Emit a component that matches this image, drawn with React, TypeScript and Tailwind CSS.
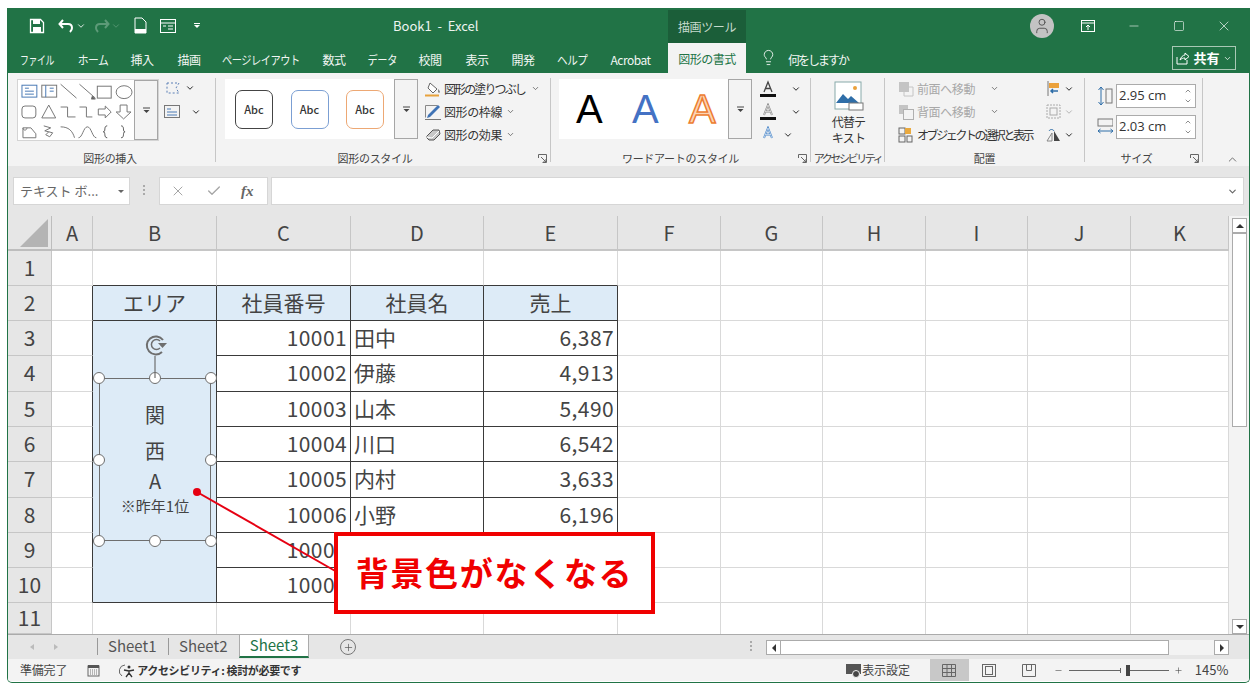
import { Check, ChevronDown, ChevronUp, Lightbulb, Minus, Plus, Square, User, X } from "lucide-react";
import type { ReactNode } from "react";

const tabs = [
  { label: "ファイル", w: "w-[34px]", gap: "ml-[12px]", inner: "scale-x-[0.74]" },
  { label: "ホーム", w: "w-[30px]", gap: "ml-[24px]", inner: "scale-x-[0.9]" },
  { label: "挿入", w: "w-[24px]", gap: "ml-[22px]", inner: "" },
  { label: "描画", w: "w-[24px]", gap: "ml-[23px]", inner: "" },
  { label: "ページレイアウト", w: "w-[78px]", gap: "ml-[21px]", inner: "scale-x-[0.85]" },
  { label: "数式", w: "w-[24px]", gap: "ml-[22px]", inner: "" },
  { label: "データ", w: "w-[28px]", gap: "ml-[22px]", inner: "scale-x-[0.85]" },
  { label: "校閲", w: "w-[24px]", gap: "ml-[22px]", inner: "" },
  { label: "表示", w: "w-[24px]", gap: "ml-[23px]", inner: "" },
  { label: "開発", w: "w-[24px]", gap: "ml-[22px]", inner: "" },
  { label: "ヘルプ", w: "w-[30px]", gap: "ml-[22px]", inner: "scale-x-[0.88]" },
  { label: "Acrobat", w: "w-[45px]", gap: "ml-[21px]", inner: "" },
];

const rows = [
  { no: "10001", name: "田中", sales: "6,387" },
  { no: "10002", name: "伊藤", sales: "4,913" },
  { no: "10003", name: "山本", sales: "5,490" },
  { no: "10004", name: "川口", sales: "6,542" },
  { no: "10005", name: "内村", sales: "3,633" },
  { no: "10006", name: "小野", sales: "6,196" },
  { no: "10007", name: "", sales: "" },
  { no: "10008", name: "", sales: "" },
];

const colHeads = ["A", "B", "C", "D", "E", "F", "G", "H", "I", "J", "K"];
const light = "border-r border-b border-[#d9d9d9]";
const dark = "border-r border-b border-[#3a3a3a]";
const cellText = "text-[21px] leading-none text-[#444] flex items-center overflow-hidden whitespace-nowrap pb-[2px]";

function Ico({ w = 18, h = 18, children }: { w?: number; h?: number; children: ReactNode }) {
  return (
    <svg width={w} height={h} viewBox={`0 0 ${w} ${h}`} fill="none" className="shrink-0">
      {children}
    </svg>
  );
}

function Chev({ className = "text-[#444]" }: { className?: string }) {
  return <ChevronDown size={10} strokeWidth={2} className={className} />;
}

function Expand() {
  return (
    <div className="flex w-[24px] shrink-0 items-center justify-center self-stretch border border-[#a6a6a6] bg-[#f3f3f3]">
      <svg width="9" height="7" viewBox="0 0 9 7">
        <path d="M1 1h7" stroke="#444" />
        <path d="M1.5 3h6L4.5 6z" fill="#444" />
      </svg>
    </div>
  );
}

function Launcher() {
  return (
    <svg width="9" height="9" viewBox="0 0 9 9" fill="none" stroke="#666">
      <path d="M.5 4V.5h8v8H4.5M3 3l5 5M8 5v3H5" />
    </svg>
  );
}

function Group({
  w,
  label,
  labelClass = "",
  launcher,
  children,
}: {
  w: string;
  label: string;
  labelClass?: string;
  launcher?: boolean;
  children: ReactNode;
}) {
  return (
    <div className={`${w} flex h-[84px] shrink-0 flex-col border-r border-[#c6c6c6]`}>
      <div className="flex h-[72px] shrink-0 items-start">{children}</div>
      <div className={`relative flex h-[16px] shrink-0 items-center justify-center whitespace-nowrap text-[11px] leading-none tracking-[-0.3px] text-[#444] ${labelClass}`}>
        {label}
        {launcher && (
          <span className="absolute right-[3px] top-[4px] flex">
            <Launcher />
          </span>
        )}
      </div>
    </div>
  );
}

function RibbonRow({
  icon,
  text,
  chev = true,
  muted = false,
  ml = "ml-[2px]",
  track = "tracking-[-0.4px]",
  chevMl = "ml-[4px]",
}: {
  icon: ReactNode;
  text: string;
  chev?: boolean;
  muted?: boolean;
  ml?: string;
  track?: string;
  chevMl?: string;
}) {
  return (
    <div className={`flex h-[23px] items-center whitespace-nowrap text-[12px] ${track} ${muted ? "text-[#a8a8a8]" : "text-[#333]"}`}>
      {icon}
      <span className={ml}>{text}</span>
      {chev && <ChevronDown size={9} strokeWidth={2} className={`${chevMl} text-[#555]`} />}
    </div>
  );
}

function ShapeGallery() {
  return (
    <svg width="117" height="60" viewBox="0 0 117 60" fill="none" stroke="#777" strokeWidth="1">
      <rect x="4" y="5" width="15" height="12" stroke="#4a7ab5" />
      <path d="M7 8h4M7 11h9M7 14h9" stroke="#4a7ab5" />
      <rect x="24" y="5" width="15" height="12" stroke="#777" />
      <path d="M28 5v12M32 8h4M32 11h4" stroke="#4a7ab5" />
      <path d="M43 4l16 14M62 4l16 14" />
      <path d="M75 16l3 3-4 0z" fill="#555" />
      <rect x="80" y="6" width="14" height="12" />
      <ellipse cx="107" cy="12" rx="8" ry="6.5" />
      <rect x="4" y="26" width="14" height="12" rx="3" />
      <path d="M24 38l7-13 7 13z" />
      <path d="M43 27h7v10h8M62 27h7v10h6" />
      <path d="M81 29h7v-3l6 6-6 6v-3h-7z" />
      <path d="M103 25h7v7h4l-7.500 7-7.500-7h4z" />
      <path d="M5 48h8l5 6v4H5zM5 48c0 3 4 3 4 0" />
      <path d="M26 46l7 2-6 3 8 2-3 4-4-2 3-3" />
      <path d="M43 47c8 0 12 4 14 11" />
      <path d="M61 58c4 0 5-11 9-11s5 11 9 11" />
      <path d="M90 46c-4 0-1 6-4 6 3 0 0 6 4 6M104 46c4 0 1 6 4 6-3 0 0 6-4 6" stroke="#555" />
    </svg>
  );
}

function UnderA({ bar, blue, outline }: { bar?: boolean; blue?: boolean; outline?: boolean }) {
  return (
    <svg width="16" height="18" viewBox="0 0 16 18" fill="none">
      <path d="M4 12L8 2l4 10M5.500 8.500h5" stroke={blue ? "#4a86c8" : outline ? "#888" : "#444"} strokeWidth={blue || outline ? 2 : 1.3} />
      {(blue || outline) && <path d="M4 12L8 2l4 10M5.500 8.500h5" stroke="#fff" strokeWidth=".6" />}
      {bar && <rect x="0" y="14" width="16" height="3" fill="#111" />}
    </svg>
  );
}

function Handle({ className }: { className: string }) {
  return <span className={`absolute h-[12px] w-[12px] rounded-full border-[1.5px] border-[#6e6e6e] bg-white ${className}`} />;
}

function AbcBox({ color }: { color: string }) {
  return (
    <div className={`flex h-[39px] w-[38px] items-center justify-center rounded-[7px] border-[1.5px] bg-white text-[11px] font-medium text-[#333] ${color}`}>
      Abc
    </div>
  );
}

function TitleBar() {
  return (
    <div className="flex h-[35px] items-center bg-[#217346] text-white">
      <div className="ml-[21px] flex items-center">
        <Ico w={16} h={16}>
          <path d="M1.500 1.500h10l3 3v10h-13z" stroke="#fff" strokeWidth="1.300" />
          <rect x="4" y="2" width="7" height="4" fill="#fff" />
          <rect x="4" y="9" width="8" height="5" fill="#fff" />
        </Ico>
        <span className="ml-[13px] flex">
          <Ico w={16} h={14}>
            <path d="M5 1L1.500 5 5 9M2 5h8c3 0 4 2 4 4s-1 3-2 4" stroke="#fff" strokeWidth="2" />
          </Ico>
        </span>
        <Chev className="ml-[2px] text-white" />
        <span className="ml-[8px] flex">
          <Ico w={16} h={14}>
            <path d="M11 1l3.500 4L11 9M14 5H6c-3 0-4 2-4 4s1 3 2 4" stroke="#5d9a78" strokeWidth="2" />
          </Ico>
        </span>
        <Chev className="ml-[1px] text-[#5d9a78]" />
        <span className="ml-[13px] flex">
          <Ico w={13} h={17}>
            <path d="M1 1h7l4 4v11H1z" stroke="#fff" />
            <path d="M1 12h11v4H1z" fill="#fff" />
          </Ico>
        </span>
        <span className="ml-[13px] flex">
          <Ico w={16} h={14}>
            <rect x=".5" y=".5" width="15" height="13" stroke="#fff" />
            <path d="M.5 4h15M3 7h3M8 7h5M8 10h5" stroke="#fff" />
          </Ico>
        </span>
        <span className="ml-[18px] flex flex-col items-center gap-[1px]">
          <span className="h-px w-[6px] bg-white" />
          <span className="h-0 w-0 border-x-[3px] border-t-[3px] border-x-transparent border-t-white" />
        </span>
      </div>
      <span className="ml-[193px] w-[89px] whitespace-nowrap text-[13px] text-[#eef5f0]">Book1&nbsp; -&nbsp; Excel</span>
      <div className="ml-[186px] mt-[2px] flex h-[33px] w-[78px] items-center justify-center bg-[#1b5e39] text-[12px] tracking-[-0.4px] text-[#c5dacc]">
        描画ツール
      </div>
      <div className="ml-[284px] flex h-[24px] w-[24px] items-center justify-center rounded-full bg-[#c3c3c3]">
        <User size={18} strokeWidth={1.3} className="text-[#555]" />
      </div>
      <span className="ml-[27px] flex">
        <Ico w={14} h={12}>
          <rect x=".5" y=".5" width="13" height="11" stroke="#fff" />
          <path d="M.5 3h13M7 10V5M5 7l2-2 2 2" stroke="#fff" />
        </Ico>
      </span>
      <Minus size={14} strokeWidth={1} className="ml-[32px]" />
      <Square size={12} strokeWidth={1.2} className="ml-[32px]" />
      <X size={16} strokeWidth={1} className="ml-[31px]" />
    </div>
  );
}

function TabRow() {
  return (
    <div className="flex h-[30px] items-end bg-[#217346] text-[12px] text-[#f1f6f3]">
      {tabs.map((t) => (
        <span key={t.label} className={`${t.gap} ${t.w} mb-[7px] flex shrink-0 justify-center whitespace-nowrap leading-none tracking-[-0.5px]`}>
          <span className={t.inner}>{t.label}</span>
        </span>
      ))}
      <div className="ml-[15px] flex h-[30px] w-[78px] items-center justify-center bg-[#f3f3f3] pt-[1px] tracking-[-0.5px] text-[#217346]">
        図形の書式
      </div>
      <Lightbulb size={17} strokeWidth={1.2} className="mb-[7px] ml-[14px] text-white" />
      <span className="mb-[7px] ml-[11px] w-[57px] whitespace-nowrap leading-none tracking-[-2px]">何をしますか</span>
      <div className="mb-[3px] ml-[327px] flex h-[24px] w-[64px] items-center justify-center border border-[#a9c8b5] text-[13px] font-bold text-white">
        <svg width="14" height="13" viewBox="0 0 14 13" fill="none" stroke="#fff" className="mr-[3px]">
          <path d="M1 5v7h10V8M4 8c1-3 3-5 5-5V1l4 3.500L9 8V6C7 6 5.500 6.500 4 8z" />
        </svg>
        共有
        <ChevronDown size={9} className="ml-[3px]" />
      </div>
    </div>
  );
}

function Ribbon() {
  return (
    <div className="flex h-[93px] items-start bg-[#f3f3f3] pt-[5px]">
      <Group w="w-[208px]" label="図形の挿入" labelClass="pr-[3px]">
        <div className="ml-[9px] mt-[1px] flex h-[62px] w-[142px] border border-[#d4d4d4] bg-white">
          <ShapeGallery />
          <Expand />
        </div>
        <div className="ml-[5px] flex flex-col">
          <div className="flex h-[20px] items-center">
            <Ico w={18} h={16}>
              <path d="M3 3h12l-3 5 3 5H3z" stroke="#5a7fb5" strokeDasharray="2 2" />
            </Ico>
            <Chev className="ml-[3px]" />
          </div>
          <div className="mt-[3px] flex h-[22px] items-center">
            <Ico w={16} h={14}>
              <rect x=".5" y=".5" width="15" height="12" stroke="#777" />
              <path d="M3 4h4M3 7h10M3 10h10" stroke="#4a7ab5" />
            </Ico>
            <Chev className="ml-[11px]" />
          </div>
        </div>
      </Group>
      <Group w="w-[335px]" label="図形のスタイル" labelClass="pr-[16px]" launcher>
        <div className="ml-[9px] mt-[1px] flex h-[60px] w-[193px] items-center bg-white">
          <div className="flex flex-1 justify-between pl-[10px] pr-[10px]">
            <AbcBox color="border-[#444]" />
            <AbcBox color="border-[#7b9fd3]" />
            <AbcBox color="border-[#eda874]" />
          </div>
          <Expand />
        </div>
        <div className="-mt-[1px] ml-[6px] flex flex-col">
          <RibbonRow
            text="図形の塗りつぶし"
            track="tracking-[-1.900px]"
            chevMl="ml-[6px]"
            icon={
              <Ico>
                <path d="M6 3l7 6-4 4-5-5z" fill="#fff" stroke="#666" />
                <path d="M14 9c1 1 2 2 2 3s-2 1-2 0z" fill="#888" />
                <path d="M1 15.500h14" stroke="#e8a23c" strokeWidth="2" />
              </Ico>
            }
          />
          <RibbonRow
            text="図形の枠線"
            icon={
              <Ico>
                <path d="M1.500 14.500v-12h12" stroke="#888" />
                <path d="M4 12l10-10 2 2L6 14l-3 1z" fill="#3f73b5" />
                <path d="M1 16.500h16" stroke="#777" />
              </Ico>
            }
          />
          <RibbonRow
            text="図形の効果"
            icon={
              <Ico>
                <path d="M2 11l7-7h6l1 4-6 6H5z" fill="#c8c8c8" stroke="#555" />
                <path d="M2 11l6 1 7-7" stroke="#fff" />
              </Ico>
            }
          />
        </div>
      </Group>
      <Group w="w-[260px]" label="ワードアートのスタイル" launcher>
        <div className="ml-[8px] mt-[1px] flex h-[60px] w-[193px] items-center bg-white">
          <div className="flex flex-1 pl-[17px] font-['Liberation_Sans',sans-serif] text-[40px] leading-none">
            <span className="w-[56px] text-black">A</span>
            <span className="w-[57px] text-[#4472c4]">A</span>
            <span className="text-[#fbd5b5] [-webkit-text-stroke:1.5px_#ed7d31]">A</span>
          </div>
          <Expand />
        </div>
        <div className="-mt-[1px] ml-[8px] flex flex-col">
          <div className="flex h-[23px] items-center">
            <UnderA bar />
            <Chev className="ml-[15px]" />
          </div>
          <div className="flex h-[23px] items-center">
            <UnderA bar outline />
            <Chev className="ml-[15px]" />
          </div>
          <div className="flex h-[23px] items-center">
            <UnderA blue />
            <Chev className="ml-[7px]" />
          </div>
        </div>
      </Group>
      <Group w="w-[74px]" label="アクセシビリティ" labelClass="tracking-[-2.400px]">
        <div className="flex w-full flex-col items-center pl-[2px] pt-[3px]">
          <svg width="30" height="30" viewBox="0 0 30 30" fill="none">
            <rect x="1" y="1" width="26" height="27" fill="#fff" stroke="#8aa" />
            <circle cx="21" cy="7" r="2" fill="#eba13b" />
            <path d="M2 22l7-9 5 5 3-3 8 7z" fill="#2f6ea8" />
            <rect x="15" y="22" width="14" height="7" fill="#fff" stroke="#777" />
          </svg>
          <div className="mt-[3px] text-center text-[12px] leading-[16px] tracking-[-0.8px] text-[#333]">
            代替テ
            <br />
            キスト
          </div>
        </div>
      </Group>
      <Group w="w-[200px]" label="配置">
        <div className="-mt-[1px] ml-[13px] flex w-[136px] flex-col">
          <RibbonRow
            muted
            text="前面へ移動"
            ml="ml-[3px]"
            chevMl="ml-[15px]"
            icon={
              <Ico w={16} h={16}>
                <rect x="1" y="1" width="10" height="10" fill="#c4c4c4" />
                <path d="M11 6h4v9H6v-4" stroke="#c4c4c4" />
              </Ico>
            }
          />
          <RibbonRow
            muted
            text="背面へ移動"
            ml="ml-[3px]"
            chevMl="ml-[15px]"
            icon={
              <Ico w={16} h={16}>
                <rect x="1" y="1" width="9" height="9" fill="#c4c4c4" />
                <rect x="5.500" y="5.500" width="10" height="10" fill="#f3f3f3" stroke="#b0b0b0" />
              </Ico>
            }
          />
          <RibbonRow
            chev={false}
            text="オブジェクトの選択と表示"
            ml="ml-[3px]"
            track="tracking-[-2.400px]"
            icon={
              <Ico w={16} h={16}>
                <rect x="1" y="1" width="6" height="6" stroke="#666" />
                <rect x="7" y="1" width="6" height="6" fill="#e9a93f" />
                <rect x="1" y="9" width="6" height="6" stroke="#666" />
                <rect x="9" y="9" width="5" height="6" stroke="#666" />
              </Ico>
            }
          />
        </div>
        <div className="-mt-[1px] ml-[12px] flex flex-col">
          <div className="flex h-[23px] items-center">
            <Ico w={15} h={17}>
              <path d="M2 1v15" stroke="#777" />
              <rect x="3" y="3" width="10" height="5" fill="#eba13b" />
              <path d="M12 11H5M7 9l-2 2 2 2" stroke="#2f6ea8" strokeWidth="1.500" />
            </Ico>
            <Chev className="ml-[3px]" />
          </div>
          <div className="flex h-[23px] items-center">
            <Ico w={15} h={15}>
              <rect x="1" y="1" width="13" height="13" stroke="#aaa" strokeDasharray="2 1" />
              <rect x="4" y="4" width="7" height="7" stroke="#aaa" />
            </Ico>
            <Chev className="ml-[3px] text-[#aaa]" />
          </div>
          <div className="flex h-[23px] items-center">
            <Ico w={16} h={14}>
              <path d="M1 13l5-8v8z" fill="none" stroke="#888" />
              <path d="M8 13V3l6 10z" fill="#444" />
              <path d="M3 3c1-2 4-2 5 0" stroke="#2f6ea8" />
            </Ico>
            <Chev className="ml-[2px]" />
          </div>
        </div>
      </Group>
      <Group w="w-[118px]" label="サイズ" labelClass="pr-[14px]" launcher>
        <div className="flex flex-col pl-[12px] pt-[6px]">
          <div className="flex h-[24px] items-center">
            <Ico w={16} h={20}>
              <path d="M4 1v18M1.500 4L4 1l2.500 3M1.500 16L4 19l2.500-3" stroke="#2f6ea8" />
              <rect x="9" y="3" width="6" height="14" stroke="#777" />
            </Ico>
            <NumBox value="2.95 cm" />
          </div>
          <div className="mt-[7px] flex h-[24px] items-center">
            <Ico w={16} h={18}>
              <rect x="1" y="1" width="15" height="7" stroke="#777" />
              <path d="M1 13h15M3.500 11L1 13l2.500 2M13.500 11l2.500 2-2.500 2" stroke="#2f6ea8" />
            </Ico>
            <NumBox value="2.03 cm" />
          </div>
        </div>
      </Group>
      <div className="flex h-[88px] flex-1 items-end justify-end pr-[10px]">
        <ChevronUp size={13} strokeWidth={1.5} className="text-[#555]" />
      </div>
    </div>
  );
}

function NumBox({ value }: { value: string }) {
  return (
    <div className="ml-[3px] flex h-[24px] w-[80px] items-center justify-between border border-[#ababab] bg-white pl-[2px] pr-[3px] font-['Open_Sans',sans-serif] text-[13px] text-[#333]">
      {value}
      <span className="flex flex-col">
        <ChevronUp size={8} strokeWidth={2} className="text-[#555]" />
        <ChevronDown size={8} strokeWidth={2} className="mt-[2px] text-[#555]" />
      </span>
    </div>
  );
}

function FormulaBar() {
  return (
    <div className="flex h-[50px] items-start bg-[#e6e6e6] pl-[5px] pr-[5px] pt-[11px]">
      <div className="flex h-[28px] w-[117px] items-center justify-between border border-[#d6d6d6] bg-white pl-[6px] pr-[5px] text-[13px] text-[#666]">
        テキスト ボ...
        <span className="h-0 w-0 border-x-[3px] border-t-[3px] border-x-transparent border-t-[#666]" />
      </div>
      <div className="ml-[12px] mt-[8px] flex w-[4px] flex-col items-center gap-[2px]">
        <span className="h-[2px] w-[2px] bg-[#aaa]" />
        <span className="h-[2px] w-[2px] bg-[#aaa]" />
        <span className="h-[2px] w-[2px] bg-[#aaa]" />
      </div>
      <div className="ml-[13px] flex h-[28px] w-[109px] items-center border border-[#d6d6d6] bg-white pl-[10px]">
        <X size={16} strokeWidth={1.5} className="text-[#a6a6a6]" />
        <Check size={16} strokeWidth={2} className="ml-[20px] text-[#a6a6a6]" />
        <span className="ml-[19px] font-['Liberation_Serif',serif] text-[15px] font-bold italic text-[#666]">fx</span>
      </div>
      <div className="ml-[3px] flex h-[28px] flex-1 items-center justify-end border border-[#d6d6d6] bg-white pr-[5px]">
        <ChevronDown size={11} strokeWidth={2.5} className="text-[#666]" />
      </div>
    </div>
  );
}

function RowHead({ n }: { n: number }) {
  return (
    <div className="flex items-center justify-center border-b border-r border-[#c6c6c6] bg-[#e6e6e6] pb-[2px] text-[21px] leading-none text-[#444]">{n}</div>
  );
}

function Sheet() {
  const filler = [0, 1, 2, 3, 4, 5];
  return (
    <div className="relative flex h-[418px]">
      <div className="grid h-full w-[1221px] grid-cols-[44px_41px_124px_134px_133px_134px_103px_102px_103px_102px_103px_98px] grid-rows-[35px_35px_35px_35px_36px_35px_35px_36px_35px_35px_35px_31px]">
        <div className="relative border-b-2 border-r border-[#bdbdbd] bg-[#e6e6e6]">
          <span className="absolute bottom-[2px] right-[3px] h-0 w-0 border-b-[28px] border-l-[28px] border-b-[#b4b4b4] border-l-transparent" />
        </div>
        {colHeads.map((c) => (
          <div key={c} className="flex items-center justify-center border-b-2 border-r border-[#c6c6c6] bg-[#e6e6e6] text-[20px] leading-none text-[#444]">
            {c}
          </div>
        ))}

        <RowHead n={1} />
        <div className={light} />
        {[0, 1, 2, 3].map((i) => (
          <div key={i} className="border-b border-r border-[#d9d9d9] border-b-[#3a3a3a]" />
        ))}
        {filler.map((i) => (
          <div key={i} className={light} />
        ))}

        <RowHead n={2} />
        <div className="border-b border-r border-[#d9d9d9] border-r-[#3a3a3a]" />
        {["エリア", "社員番号", "社員名", "売上"].map((h) => (
          <div key={h} className={`${dark} ${cellText} justify-center bg-[#ddebf7] text-[20px]`}>
            {h}
          </div>
        ))}
        {filler.map((i) => (
          <div key={i} className={light} />
        ))}

        {rows.map((r, idx) => (
          <div key={r.no} className="contents">
            <RowHead n={idx + 3} />
            <div className="border-b border-r border-[#d9d9d9] border-r-[#3a3a3a]" />
            {idx === 0 && <div className={`${dark} row-span-8 bg-[#ddebf7]`} />}
            <div className={`${dark} ${cellText} justify-end pr-[3px] tracking-[0.4px]`}>{r.no}</div>
            <div className={`${dark} ${cellText} pl-[3px]`}>{r.name}</div>
            <div className={`${dark} ${cellText} justify-end pr-[3px] tracking-[0.4px]`}>{r.sales}</div>
            {filler.map((i) => (
              <div key={i} className={light} />
            ))}
          </div>
        ))}

        <RowHead n={11} />
        <div className="border-r border-[#d9d9d9]" />
        {[0, 1, 2, 3, 4, 5, 6, 7, 8, 9].map((i) => (
          <div key={i} className="border-r border-[#d9d9d9]" />
        ))}
      </div>

      <div className="flex w-[20px] flex-col items-center bg-[#f3f3f3] pl-[1px] pt-[2px]">
        <ScrollBtn up />
        <div className="h-[194px] w-[15px] border border-[#ababab] bg-white" />
        <div className="flex-1" />
        <ScrollBtn />
      </div>
    </div>
  );
}

function ScrollBtn({ up }: { up?: boolean }) {
  return (
    <div className="flex h-[15px] w-[15px] shrink-0 items-center justify-center border border-[#ababab] bg-white">
      <span className={`h-0 w-0 border-x-[4px] border-x-transparent ${up ? "border-b-[4px] border-b-[#333]" : "border-t-[4px] border-t-[#333]"}`} />
    </div>
  );
}

function SheetTabs() {
  return (
    <div className="flex h-[25px] items-start border-t border-[#ababab] bg-[#e6e6e6] text-[15px] text-[#555]">
      <div className="ml-[22px] mt-[9px] flex items-center gap-[20px]">
        <span className="h-0 w-0 border-y-[3px] border-r-[4px] border-y-transparent border-r-[#bbb]" />
        <span className="h-0 w-0 border-y-[3px] border-l-[4px] border-y-transparent border-l-[#bbb]" />
      </div>
      <div className="ml-[39px] mt-[3px] flex h-[17px] w-[59px] items-center border-l border-[#999] pl-[10px]">Sheet1</div>
      <div className="ml-[12px] mt-[3px] flex h-[17px] w-[59px] items-center border-l border-[#999] pl-[10px]">Sheet2</div>
      <div className="ml-[12px] flex h-[23px] w-[70px] items-center justify-center border-x border-b-2 border-[#ababab] border-b-[#217346] bg-white text-[#217346]">
        Sheet3
      </div>
      <span className="ml-[31px] mt-[4px] flex h-[16px] w-[16px] items-center justify-center rounded-full border border-[#777]">
        <Plus size={11} strokeWidth={1.5} className="text-[#555]" />
      </span>
      <div className="ml-[394px] mt-[6px] flex w-[3px] flex-col gap-[2px]">
        <span className="h-[2px] w-[2px] bg-[#aaa]" />
        <span className="h-[2px] w-[2px] bg-[#aaa]" />
        <span className="h-[2px] w-[2px] bg-[#aaa]" />
      </div>
      <div className="ml-[13px] mt-[5px] flex h-[15px] w-[463px] items-center bg-[#f3f3f3]">
        <div className="flex h-[15px] w-[15px] items-center justify-center border border-[#ababab] bg-white">
          <span className="h-0 w-0 border-y-[4px] border-r-[4px] border-y-transparent border-r-[#333]" />
        </div>
        <div className="h-[15px] w-[388px] border-y border-r border-[#ababab] bg-white" />
        <div className="ml-auto flex h-[15px] w-[15px] items-center justify-center border border-[#ababab] bg-white">
          <span className="h-0 w-0 border-y-[4px] border-l-[4px] border-y-transparent border-l-[#333]" />
        </div>
      </div>
    </div>
  );
}

function StatusBar() {
  return (
    <div className="flex h-[22px] items-center bg-[#f3f3f3] text-[12px] text-[#444]">
      <span className="ml-[12px] tracking-[-0.2px]">準備完了</span>
      <span className="ml-[20px] flex">
        <Ico w={13} h={13}>
          <rect x="1" y="2" width="11" height="10" stroke="#666" />
          <rect x="1" y="1" width="11" height="3" fill="#555" />
          <path d="M3 6h7M3 8h7M3 10h7" stroke="#777" strokeDasharray="1 1" />
        </Ico>
      </span>
      <span className="ml-[18px] flex">
        <Ico w={18} h={15}>
          <path d="M7 2a6 6 0 0 0-3 11" stroke="#666" />
          <circle cx="11" cy="4" r="1.500" fill="#333" />
          <path d="M6 7l5 1 5-1M11 8v2l-3 4M11 10l3 4" stroke="#333" strokeWidth="1.300" />
        </Ico>
      </span>
      <span className="ml-[1px] w-[163px] whitespace-nowrap text-[11px] font-bold tracking-[-0.35px] text-[#333]">アクセシビリティ: 検討が必要です</span>
      <span className="ml-[546px] flex">
        <Ico w={16} h={15}>
          <rect x="0" y="1" width="15" height="10" fill="#555" />
          <circle cx="10" cy="11" r="3.500" fill="#444" stroke="#f3f3f3" />
        </Ico>
      </span>
      <span className="whitespace-nowrap tracking-[-0.1px]">表示設定</span>
      <div className="ml-[20px] flex h-[22px] w-[39px] items-center justify-center bg-[#c8c8c8]">
        <Ico w={14} h={13}>
          <path d="M.5.500h13v12H.5zM.5 4.500h13M.5 8.500h13M5 .5v12M9.500.5v12" stroke="#666" />
        </Ico>
      </div>
      <span className="ml-[13px] flex">
        <Ico w={14} h={13}>
          <rect x=".5" y=".5" width="13" height="12" stroke="#666" />
          <rect x="3.500" y="2.500" width="7" height="8" stroke="#666" />
        </Ico>
      </span>
      <span className="ml-[26px] flex">
        <Ico w={14} h={13}>
          <path d="M.5.500h13v12H.5zM4.500.5v6h5v-6" stroke="#666" />
        </Ico>
      </span>
      <Minus size={9} strokeWidth={1.5} className="ml-[18px] text-[#444]" />
      <div className="ml-[6px] flex h-[13px] w-[100px] items-center">
        <span className="h-px w-[51px] bg-[#666]" />
        <span className="h-[5px] w-px bg-[#666]" />
        <span className="ml-[5px] h-[11px] w-[4px] bg-[#444]" />
        <span className="h-px flex-1 bg-[#666]" />
      </div>
      <Plus size={9} strokeWidth={1.5} className="ml-[5px] text-[#444]" />
      <span className="ml-[12px] whitespace-nowrap text-[13px]">145%</span>
    </div>
  );
}

export default function App() {
  return (
    <div className="relative h-[690px] w-[1256px] overflow-hidden bg-white pl-[7px] pt-[8px] font-['Noto_Sans_CJK_JP',sans-serif]">
      <div className="flex h-[675px] w-[1243px] flex-col overflow-hidden rounded-b-[5px] border-x border-b border-[#217346]">
        <TitleBar />
        <TabRow />
        <Ribbon />
        <FormulaBar />
        <Sheet />
        <SheetTabs />
        <StatusBar />
      </div>

      {/* text box selected over column B */}
      <div className="absolute left-[99px] top-[378px] flex h-[163px] w-[112px] flex-col items-center border-[1.5px] border-[#6e6e6e] bg-[#ddebf7] pt-[18px] text-[#444]">
        <span className="text-[20px] leading-[36px]">関</span>
        <span className="text-[20px] leading-[36px]">西</span>
        <span className="text-[20px] leading-[24px]">A</span>
        <span className="whitespace-nowrap text-[15px] leading-[26px]">※昨年1位</span>
        <Handle className="left-[-7px] top-[-7px]" />
        <Handle className="left-[49px] top-[-7px]" />
        <Handle className="right-[-7px] top-[-7px]" />
        <Handle className="left-[-7px] top-[75px]" />
        <Handle className="right-[-7px] top-[75px]" />
        <Handle className="bottom-[-7px] left-[-7px]" />
        <Handle className="bottom-[-7px] left-[49px]" />
        <Handle className="bottom-[-7px] right-[-7px]" />
      </div>
      <svg className="absolute left-[141px] top-[332px]" width="30" height="46" viewBox="0 0 30 46" fill="none" stroke="#6e6e6e">
        <path d="M14 24v22" strokeWidth="1.200" />
        <path d="M22 8A9 9 0 1 0 21 20" strokeWidth="2" />
        <path d="M19 9a5 5 0 1 0 0 7" strokeWidth="1.500" />
        <path d="M17 11h9l-4.500 5z" fill="#6e6e6e" stroke="none" />
      </svg>
      <svg className="absolute left-[190px] top-[485px]" width="150" height="92" viewBox="0 0 150 92" fill="none">
        <circle cx="7" cy="7" r="4" fill="#e60012" />
        <path d="M7 7l140 80" stroke="#e60012" strokeWidth="2" />
      </svg>

      {/* red callout */}
      <div className="absolute left-[334px] top-[532px] flex h-[82px] w-[321px] items-center justify-center border-4 border-[#f00000] bg-white text-[33px] font-bold tracking-[1.700px] text-[#f00000]">
        背景色がなくなる
      </div>
    </div>
  );
}
